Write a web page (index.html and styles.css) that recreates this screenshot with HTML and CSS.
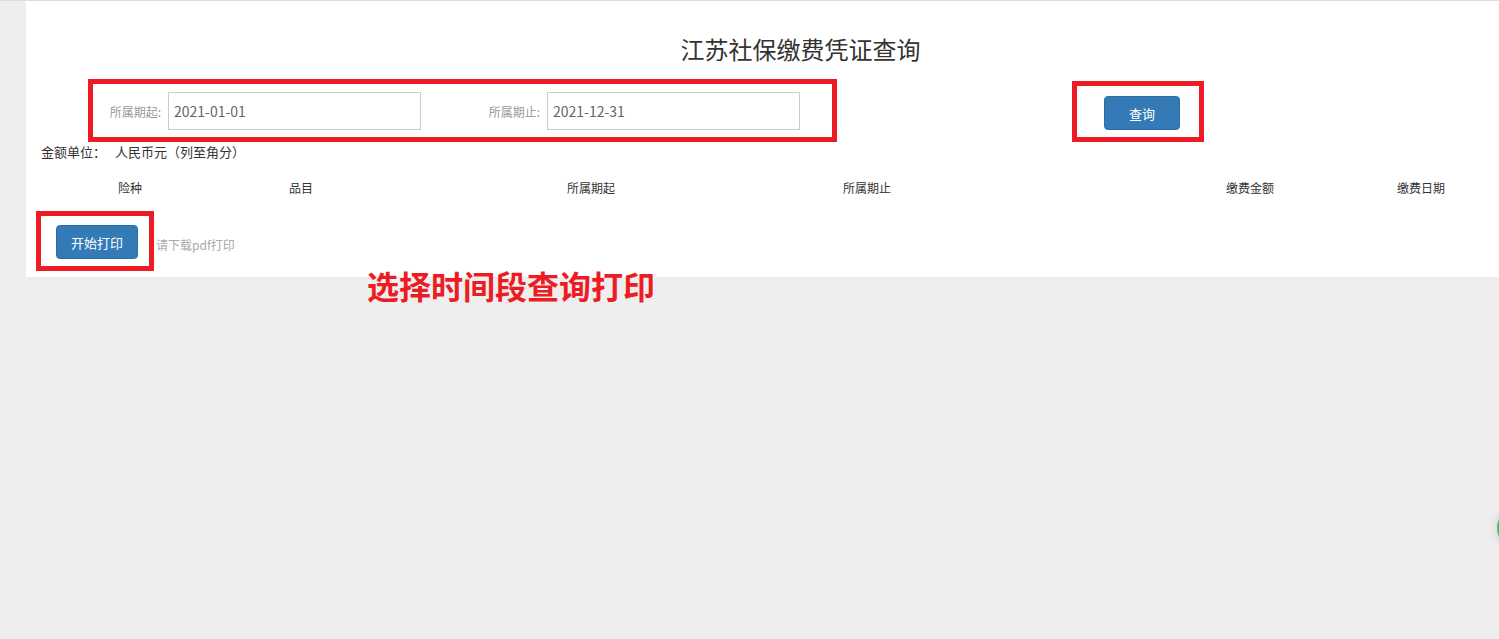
FILE: index.html
```html
<!DOCTYPE html>
<html lang="zh-CN">
<head>
<meta charset="utf-8">
<title>江苏社保缴费凭证查询</title>
<link rel="stylesheet" href="styles.css">
</head>
<body>
<div class="panel">
  <h1 class="title">江苏社保缴费凭证查询</h1>
  <div class="form-row">
    <div class="field">
      <label class="field-label">所属期起:</label>
      <input class="field-input" type="text" value="2021-01-01">
    </div>
    <div class="field field-second">
      <label class="field-label">所属期止:</label>
      <input class="field-input" type="text" value="2021-12-31">
    </div>
    <button class="btn btn-query">查询</button>
  </div>
  <div class="unit-line"><span>金额单位：</span><span class="unit-value">人民币元（列至角分）</span></div>
  <div class="table-head">
    <div class="th">险种</div>
    <div class="th">品目</div>
    <div class="th">所属期起</div>
    <div class="th">所属期止</div>
    <div class="th"></div>
    <div class="th">缴费金额</div>
    <div class="th">缴费日期</div>
  </div>
  <div class="print-row">
    <button class="btn btn-print">开始打印</button>
    <span class="print-hint">请下载pdf打印</span>
  </div>
</div>

<div class="mark mark-form"></div>
<div class="mark mark-query"></div>
<div class="mark mark-print"></div>
<div class="mark-text">选择时间段查询打印</div>
<div class="float-ball"></div>
</body>
</html>
```

FILE: styles.css
```css
* { box-sizing: border-box; }
html, body { margin: 0; padding: 0; }
body {
  background: #eeeeee;
  font-family: "Noto Sans CJK SC", "Noto Sans", "Liberation Sans", sans-serif;
  color: #333;
  min-height: 639px;
  position: relative;
  border-top: 1px solid #dddddd;
}
.panel {
  margin-left: 26px;
  background: #ffffff;
  height: 276px;
  padding-top: 30px;
}
.title {
  margin: 0;
  padding-left: 76px;
  text-align: center;
  font-size: 24px;
  font-weight: normal;
  line-height: 36px;
  color: #333;
}
.form-row {
  display: flex;
  align-items: flex-end;
  margin-top: 25px;
  padding-left: 62px;
  height: 38px;
}
.field {
  display: flex;
  align-items: center;
}
.field-second { margin-left: 46px; }
.field-label {
  width: 74px;
  text-align: right;
  padding-right: 1px;
  font-size: 12px;
  color: #999;
  margin-right: 6px;
}
.field-input {
  width: 253px;
  height: 38px;
  border: 1px solid #cccccc;
  padding: 0 5px;
  font-family: "Noto Sans CJK SC", "Noto Sans", sans-serif;
  font-size: 14px;
  color: #666;
  outline: none;
}
.btn {
  border: 1px solid #2e6da4;
  background: #337ab7;
  color: #fff;
  border-radius: 4px;
  font-family: "Noto Sans CJK SC", "Noto Sans", sans-serif;
  font-size: 13px;
  height: 34px;
  padding: 0;
}
.btn-query {
  width: 76px;
  margin-left: 304px;
}
.unit-line {
  margin-top: 12px;
  padding-left: 15px;
  font-size: 13px;
  line-height: 20px;
  color: #333;
}
.unit-value { margin-left: 9px; }
.table-head {
  display: grid;
  grid-template-columns: 178px 164px 416px 136px 207px 216px 126px;
  margin-top: 16px;
  padding-left: 15px;
}
.th {
  text-align: center;
  font-size: 12px;
  line-height: 20px;
  color: #333;
}
.print-row {
  display: flex;
  align-items: center;
  margin-top: 27px;
  padding-left: 30px;
}
.btn-print { width: 82px; }
.print-hint {
  margin-left: 18px;
  padding-top: 4px;
  font-size: 12px;
  color: #aaa;
}
.mark {
  position: absolute;
  border: 5px solid #ed1c24;
}
.mark-form { left: 88px; top: 78px; width: 749px; height: 63px; }
.mark-query { left: 1072px; top: 80px; width: 132px; height: 61px; }
.mark-print { left: 36px; top: 210px; width: 118px; height: 60px; }
.mark-text {
  position: absolute;
  left: 367px;
  top: 264px;
  font-size: 32px;
  font-weight: bold;
  line-height: 40px;
  color: #ed1c24;
}
.float-ball {
  position: absolute;
  left: 1497px;
  top: 507px;
  width: 40px;
  height: 40px;
  border-radius: 50%;
  background: #2ecc52;
  box-shadow: 0 0 6px 4px rgba(0,0,0,0.06);
}
```
